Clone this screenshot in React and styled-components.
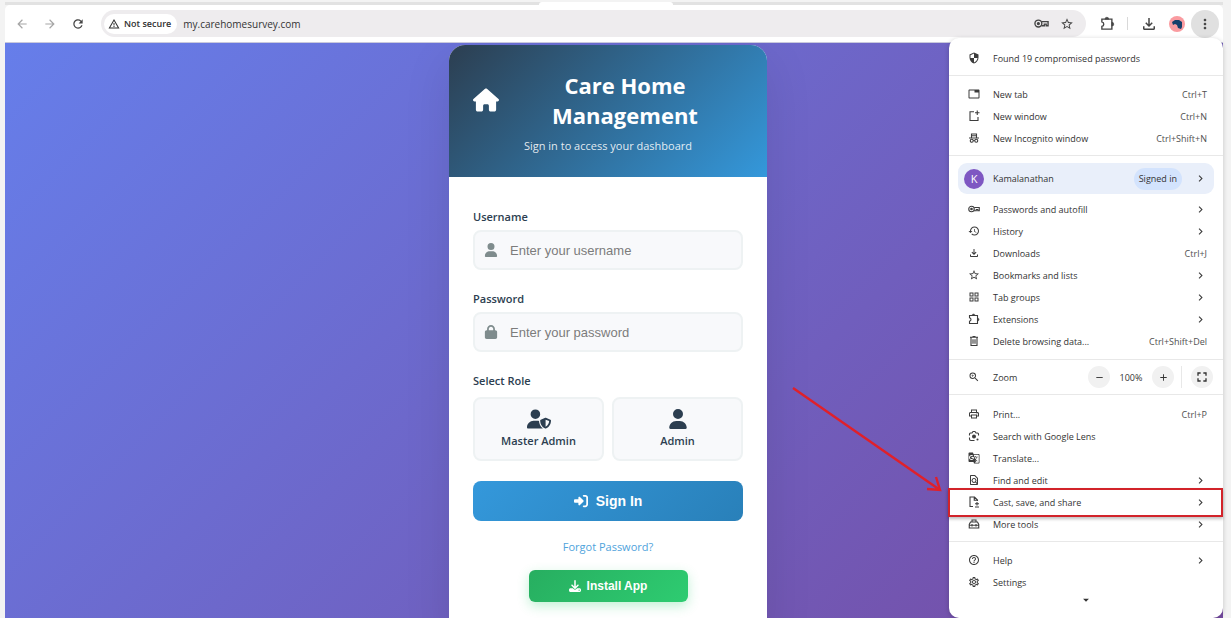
import React from "react";
import styled, { createGlobalStyle, css } from "styled-components";
import {
  FaDownload,
  FaHouse,
  FaLock,
  FaRightToBracket,
  FaUser,
  FaUserShield,
} from "react-icons/fa6";
import {
  MdAdd,
  MdArrowBack,
  MdArrowDropDown,
  MdArrowForward,
  MdChevronRight,
  MdFullscreen,
  MdGTranslate,
  MdHelpOutline,
  MdHistory,
  MdMoreVert,
  MdOutlineFileDownload,
  MdOutlineFindInPage,
  MdOutlineGridView,
  MdOutlinePrint,
  MdOutlineSettings,
  MdRefresh,
  MdRemove,
  MdSecurity,
  MdStarOutline,
  MdTab,
  MdWarningAmber,
  MdZoomIn,
} from "react-icons/md";

const GlobalStyle = createGlobalStyle`
  * {
    box-sizing: border-box;
  }
  body {
    margin: 0;
    background: #f3f3f3;
    font-family: "Open Sans", "Noto Sans", sans-serif;
    color: #333;
  }
  button, input {
    font-family: inherit;
    color: inherit;
  }
`;

const Window = styled.div`
  position: relative;
  height: 100vh;
  padding: 2px 8px 0 5px;
  display: flex;
  flex-direction: column;
  overflow: hidden;
`;

const TabStrip = styled.div`
  height: 3px;
  flex: none;
  display: flex;
  justify-content: center;
  background: #e2e2e2;
`;

const ActiveTab = styled.div`
  width: 134px;
  margin-right: 16px;
  background: white;
  border-radius: 4px 4px 0 0;
`;

const Toolbar = styled.header`
  height: 38px;
  flex: none;
  display: flex;
  align-items: center;
  padding: 0 4px 0 3px;
  background: white;
  border-bottom: 1px solid #c9c9dc;
  border-radius: 5px 5px 0 0;
`;

const ToolButton = styled.button`
  width: 28px;
  height: 28px;
  padding: 0;
  border: 0;
  border-radius: 50%;
  display: flex;
  align-items: center;
  justify-content: center;
  background: ${(props) => (props.$active ? "#e0e0e0" : "transparent")};
  color: ${(props) => (props.$muted ? "#a6a6a6" : "#454545")};
  font-size: ${(props) => props.$size || 14}px;
`;

const Omnibox = styled.div`
  flex: 1;
  height: 27px;
  margin: 0 7px 0 9px;
  padding: 0 6px 0 3px;
  display: flex;
  align-items: center;
  background: #eeecee;
  border-radius: 14px;

  ${ToolButton} {
    width: 26px;
  }
`;

const SecurityChip = styled.button`
  height: 20px;
  padding: 0 6px 0 4px;
  border: 0;
  border-radius: 10px;
  display: flex;
  align-items: center;
  gap: 4px;
  background: white;
  color: #303030;
  font-size: 9px;
  font-weight: 600;
`;

const Address = styled.input`
  flex: 1;
  min-width: 0;
  border: 0;
  padding: 0 6px;
  background: transparent;
  font-size: 10px;
  outline: none;
`;

const Separator = styled.span`
  width: 1px;
  height: 13px;
  margin: 0 7px 0 6px;
  background: #d9d9d9;
`;

const Avatar = styled.span`
  width: 16px;
  height: 16px;
  border-radius: 50%;
  background: #fa9ba0;
  display: flex;
`;

const Page = styled.main`
  flex: 1;
  min-height: 0;
  overflow: hidden;
  display: flex;
  justify-content: center;
  align-items: flex-start;
  padding: 2px 12px 0 0;
  background: linear-gradient(135deg, #667eea 0%, #764ba2 100%);
`;

const Card = styled.section`
  width: 100%;
  max-width: 318px;
  overflow: hidden;
  background: white;
  border-radius: 16px;
  box-shadow: 0 16px 48px rgba(0, 0, 0, 0.1);
`;

const CardHeader = styled.div`
  padding: 25px 24px 23px;
  background: linear-gradient(135deg, #2c3e50 0%, #3498db 100%);
  color: white;
  text-align: center;
`;

const Brand = styled.div`
  display: flex;
  align-items: center;
  gap: 8px;
  font-size: 26px;

  svg {
    flex: none;
  }
`;

const Title = styled.h1`
  flex: 1;
  margin: 0;
  font-size: 22px;
  line-height: 30px;
  font-weight: 700;
`;

const Subtitle = styled.p`
  margin: 8px 0 0;
  font-size: 11px;
  line-height: 16px;
  color: rgba(255, 255, 255, 0.88);
`;

const Form = styled.form`
  padding: 32px 24px;
  display: flex;
  flex-direction: column;
`;

const labelStyle = css`
  display: block;
  padding: 0;
  font-size: 11px;
  line-height: 16px;
  font-weight: 600;
  color: #2c3e50;
`;

const Field = styled.div`
  margin-bottom: 21px;
`;

const Label = styled.label`
  ${labelStyle}
  margin-bottom: 5px;
`;

const InputBox = styled.div`
  height: 40px;
  display: flex;
  align-items: center;
  gap: 12px;
  padding: 0 9px;
  border: 2px solid #eef2f3;
  border-radius: 8px;
  background: #f8f9fb;
  color: #7f8c8d;
  font-size: 14px;
`;

const TextInput = styled.input`
  flex: 1;
  min-width: 0;
  padding: 0;
  border: 0;
  outline: none;
  background: transparent;
  font-family: "Liberation Sans", Arial, sans-serif;
  font-size: 13px;

  &::placeholder {
    color: #7c7c7c;
  }
`;

const RoleGroup = styled.fieldset`
  margin: 0 0 20px;
  padding: 0;
  border: 0;
  min-width: 0;
`;

const Legend = styled.legend`
  ${labelStyle}
  margin-bottom: 8px;
`;

const Roles = styled.div`
  display: flex;
  gap: 8px;
`;

const RoleButton = styled.button`
  flex: 1;
  height: 64px;
  padding: 0;
  display: flex;
  flex-direction: column;
  align-items: center;
  justify-content: center;
  gap: 4px;
  border: 2px solid #eef2f3;
  border-radius: 8px;
  background: #f8f9fb;
  color: #2c3e50;
  font-size: 11px;
  line-height: 16px;
  font-weight: 600;
`;

const RoleIcon = styled.span`
  height: 20px;
  display: flex;
  align-items: center;
  font-size: ${(props) => props.$size}px;
`;

const SignInButton = styled.button`
  height: 40px;
  border: 0;
  border-radius: 8px;
  display: flex;
  align-items: center;
  justify-content: center;
  gap: 8px;
  background: linear-gradient(135deg, #3498db, #2980b9);
  color: white;
  font-family: "Liberation Sans", Arial, sans-serif;
  font-size: 14px;
  font-weight: 700;
`;

const ForgotLink = styled.a`
  align-self: center;
  margin: 18px 0 15px;
  font-size: 11px;
  line-height: 16px;
  color: #4fa3dc;
  text-decoration: none;
`;

const InstallButton = styled.button`
  align-self: center;
  width: 159px;
  height: 32px;
  border: 0;
  border-radius: 6px;
  display: flex;
  align-items: center;
  justify-content: center;
  gap: 6px;
  background: linear-gradient(135deg, #27ae60, #2ecc71);
  box-shadow: 0 4px 12px rgba(46, 204, 113, 0.3);
  color: white;
  font-family: "Liberation Sans", Arial, sans-serif;
  font-size: 12px;
  font-weight: 700;
`;

const Menu = styled.nav`
  position: absolute;
  top: 38px;
  right: 8px;
  width: 274px;
  padding-bottom: 12px;
  background: white;
  border-radius: 10px;
  box-shadow: 0 1px 5px rgba(0, 0, 0, 0.2);
`;

const MenuSection = styled.div`
  padding: ${(props) => props.$pad || "7px 0 6px"};

  & + & {
    border-top: 1px solid #e8e8e8;
  }
`;

const MenuRow = styled.button`
  position: relative;
  width: 100%;
  height: 22px;
  padding: 0 16px 0 19px;
  border: 0;
  display: flex;
  align-items: center;
  background: transparent;
  font-size: 9px;
  text-align: left;
`;

const MenuIcon = styled.span`
  width: 12px;
  margin-right: 13px;
  display: flex;
  justify-content: center;
  font-size: 12px;
  color: #3c3c3c;
`;

const MenuText = styled.span`
  flex: 1;
  white-space: nowrap;
`;

const Shortcut = styled.span`
  color: #505050;
`;

const Chevron = styled(MdChevronRight)`
  font-size: 13px;
  color: #3c3c3c;
`;

const Highlight = styled.span`
  position: absolute;
  inset: -3px 0 -4px -1px;
  border: 2px solid #d2232a;
  box-shadow: 0 2px 3px rgba(0, 0, 0, 0.25);
`;

const Pointer = styled.svg`
  position: absolute;
  right: 100%;
  bottom: 19px;
  margin-right: 6px;
`;

const Profile = styled.button`
  width: calc(100% - 18px);
  height: 31px;
  margin: 0 9px 4px;
  padding: 0 7px 0 6px;
  border: 0;
  border-radius: 9px;
  display: flex;
  align-items: center;
  background: #e9effa;
  font-size: 9px;
  text-align: left;
`;

const Initial = styled.span`
  width: 20px;
  height: 20px;
  margin-right: 9px;
  border-radius: 50%;
  display: flex;
  align-items: center;
  justify-content: center;
  background: #7e57c2;
  color: white;
  font-size: 11px;
`;

const SignedIn = styled.span`
  padding: 0 5px;
  margin-right: 12px;
  line-height: 22px;
  border-radius: 11px;
  background: #d3e3fd;
`;

const ZoomRow = styled.div`
  height: 34px;
  padding: 0 10px 0 19px;
  display: flex;
  align-items: center;
  font-size: 9px;

  ${Separator} {
    height: 22px;
    margin: 0 9px 0 7px;
    background: #e8e8e8;
  }
`;

const ZoomButton = styled.button`
  width: 22px;
  height: 22px;
  padding: 0;
  border: 0;
  border-radius: 50%;
  display: flex;
  align-items: center;
  justify-content: center;
  background: #f1f1f1;
  font-size: ${(props) => props.$size || 11}px;
`;

const ZoomValue = styled.span`
  width: 42px;
  text-align: center;
`;

const ScrollHint = styled.div`
  height: 13px;
  display: flex;
  align-items: center;
  justify-content: center;
  font-size: 14px;
`;

const Stroke = ({ children }) => (
  <svg
    width="1em"
    height="1em"
    viewBox="0 0 24 24"
    fill="none"
    stroke="currentColor"
    strokeWidth="2.2"
    aria-hidden="true"
  >
    {children}
  </svg>
);

const KeyIcon = () => (
  <Stroke>
    <circle cx="7" cy="12" r="5.5" />
    <circle cx="7" cy="12" r="1.5" fill="currentColor" />
    <path d="M12.500 9H22.500v6.500h-3V13h-3v2.500h-4.500" />
  </Stroke>
);

const NewWindowIcon = () => (
  <Stroke>
    <path d="M12 3.500H4V21h16v-7M18.500 1v9M14 5.500h9" />
  </Stroke>
);

const IncognitoIcon = () => (
  <Stroke>
    <path d="M2 12h20M7 11V4h10v7M7 7.500h10" />
    <circle cx="7.500" cy="17.500" r="3" />
    <circle cx="16.500" cy="17.500" r="3" />
    <path d="M10.500 17h3" />
  </Stroke>
);

const PuzzleIcon = () => (
  <Stroke>
    <path d="M3 5h16v16H3v-4.500q3-.5 3-3.500t-3-3.500z" />
    <path
      d="M8 5a3 3 0 0 1 6 0zM19 10a3 3 0 0 1 0 6z"
      fill="currentColor"
      strokeWidth="1"
    />
  </Stroke>
);

const TrashIcon = () => (
  <Stroke>
    <path d="M4 4.500h16M9 3h6M6 5v16h12V5M10 8.500v9M14 8.500v9" />
  </Stroke>
);

const LensIcon = () => (
  <Stroke>
    <path d="M3 11V8q0-2 2-2h3l2-3h4l2 3h3q2 0 2 2v3M3 15v3q0 3 3 3h7" />
    <circle cx="12" cy="13" r="2.800" fill="currentColor" />
    <circle cx="19" cy="19" r="1" />
  </Stroke>
);

const CastIcon = () => (
  <Stroke>
    <path d="M10 21H4V2h9l6 6v2M12.500 2v6.500H19M18 12v7M14 15.500h8M14 22h8" />
  </Stroke>
);

const ToolboxIcon = () => (
  <Stroke>
    <path d="M8 8V4h8v4M2.500 20v-7L5 8h14l2.500 5v7zM2.500 14.500h19M8 12v5M16 12v5" />
  </Stroke>
);

const Item = ({ icon, text, shortcut, arrow, children }) => (
  <MenuRow type="button">
    <MenuIcon>{icon}</MenuIcon>
    <MenuText>{text}</MenuText>
    {shortcut && <Shortcut>{shortcut}</Shortcut>}
    {arrow && <Chevron />}
    {children}
  </MenuRow>
);

const BrowserMenu = () => (
  <Menu aria-label="Browser menu">
    <MenuSection $pad="9px 0 6px">
      <Item icon={<MdSecurity />} text="Found 19 compromised passwords" />
    </MenuSection>
    <MenuSection>
      <Item icon={<MdTab />} text="New tab" shortcut="Ctrl+T" />
      <Item icon={<NewWindowIcon />} text="New window" shortcut="Ctrl+N" />
      <Item
        icon={<IncognitoIcon />}
        text="New Incognito window"
        shortcut="Ctrl+Shift+N"
      />
    </MenuSection>
    <MenuSection $pad="7px 0">
      <Profile type="button">
        <Initial>K</Initial>
        <MenuText>Kamalanathan</MenuText>
        <SignedIn>Signed in</SignedIn>
        <Chevron />
      </Profile>
      <Item icon={<KeyIcon />} text="Passwords and autofill" arrow />
      <Item icon={<MdHistory />} text="History" arrow />
      <Item icon={<MdOutlineFileDownload />} text="Downloads" shortcut="Ctrl+J" />
      <Item icon={<MdStarOutline />} text="Bookmarks and lists" arrow />
      <Item icon={<MdOutlineGridView />} text="Tab groups" arrow />
      <Item icon={<PuzzleIcon />} text="Extensions" arrow />
      <Item
        icon={<TrashIcon />}
        text="Delete browsing data..."
        shortcut="Ctrl+Shift+Del"
      />
    </MenuSection>
    <MenuSection $pad="0">
      <ZoomRow>
        <MenuIcon>
          <MdZoomIn />
        </MenuIcon>
        <MenuText>Zoom</MenuText>
        <ZoomButton type="button" aria-label="Zoom out">
          <MdRemove />
        </ZoomButton>
        <ZoomValue>100%</ZoomValue>
        <ZoomButton type="button" aria-label="Zoom in">
          <MdAdd />
        </ZoomButton>
        <Separator />
        <ZoomButton type="button" aria-label="Full screen" $size={16}>
          <MdFullscreen />
        </ZoomButton>
      </ZoomRow>
    </MenuSection>
    <MenuSection $pad="8px 0 6px">
      <Item icon={<MdOutlinePrint />} text="Print..." shortcut="Ctrl+P" />
      <Item icon={<LensIcon />} text="Search with Google Lens" />
      <Item icon={<MdGTranslate />} text="Translate..." />
      <Item icon={<MdOutlineFindInPage />} text="Find and edit" arrow />
      <Item icon={<CastIcon />} text="Cast, save, and share" arrow>
        <Highlight />
        <Pointer
          width="152"
          height="108"
          viewBox="0 0 152 108"
          fill="none"
          stroke="#e0202a"
          strokeWidth="2.4"
        >
          <path d="M2 2L149 104M136 103L149 104L145 91" />
        </Pointer>
      </Item>
      <Item icon={<ToolboxIcon />} text="More tools" arrow />
    </MenuSection>
    <MenuSection $pad="7px 0 0">
      <Item icon={<MdHelpOutline />} text="Help" arrow />
      <Item icon={<MdOutlineSettings />} text="Settings" />
      <ScrollHint>
        <MdArrowDropDown />
      </ScrollHint>
    </MenuSection>
  </Menu>
);

const LoginCard = () => (
  <Card>
    <CardHeader>
      <Brand>
        <FaHouse />
        <Title>Care Home Management</Title>
      </Brand>
      <Subtitle>Sign in to access your dashboard</Subtitle>
    </CardHeader>
    <Form>
      <Field>
        <Label htmlFor="username">Username</Label>
        <InputBox>
          <FaUser />
          <TextInput id="username" placeholder="Enter your username" />
        </InputBox>
      </Field>
      <Field>
        <Label htmlFor="password">Password</Label>
        <InputBox>
          <FaLock />
          <TextInput
            id="password"
            type="password"
            placeholder="Enter your password"
          />
        </InputBox>
      </Field>
      <RoleGroup>
        <Legend>Select Role</Legend>
        <Roles>
          <RoleButton type="button">
            <RoleIcon $size={24}>
              <FaUserShield />
            </RoleIcon>
            Master Admin
          </RoleButton>
          <RoleButton type="button">
            <RoleIcon $size={20}>
              <FaUser />
            </RoleIcon>
            Admin
          </RoleButton>
        </Roles>
      </RoleGroup>
      <SignInButton type="submit">
        <FaRightToBracket />
        Sign In
      </SignInButton>
      <ForgotLink href="#forgot">Forgot Password?</ForgotLink>
      <InstallButton type="button">
        <FaDownload />
        Install App
      </InstallButton>
    </Form>
  </Card>
);

const App = () => {
  return (
    <>
      <GlobalStyle />
      <Window>
        <TabStrip>
          <ActiveTab />
        </TabStrip>
        <Toolbar>
          <ToolButton type="button" aria-label="Back" $muted>
            <MdArrowBack />
          </ToolButton>
          <ToolButton type="button" aria-label="Forward" $muted>
            <MdArrowForward />
          </ToolButton>
          <ToolButton type="button" aria-label="Reload">
            <MdRefresh />
          </ToolButton>
          <Omnibox>
            <SecurityChip type="button">
              <MdWarningAmber size={12} />
              Not secure
            </SecurityChip>
            <Address aria-label="Address" defaultValue="my.carehomesurvey.com" />
            <ToolButton type="button" aria-label="Passwords" $size={15}>
              <KeyIcon />
            </ToolButton>
            <ToolButton type="button" aria-label="Bookmark">
              <MdStarOutline />
            </ToolButton>
          </Omnibox>
          <ToolButton type="button" aria-label="Extensions" $size={15}>
            <PuzzleIcon />
          </ToolButton>
          <Separator />
          <ToolButton type="button" aria-label="Downloads" $size={18}>
            <MdOutlineFileDownload />
          </ToolButton>
          <ToolButton type="button" aria-label="Profile">
            <Avatar>
              <svg width="16" height="16" viewBox="0 0 16 16" aria-hidden="true">
                <path
                  fill="#173f6b"
                  d="M3 6L6 4L10 4L13 6V11L12 13L9 12L8 9L6 8L4 9Z"
                />
              </svg>
            </Avatar>
          </ToolButton>
          <ToolButton type="button" aria-label="Menu" $active $size={16}>
            <MdMoreVert />
          </ToolButton>
        </Toolbar>
        <Page>
          <LoginCard />
        </Page>
        <BrowserMenu />
      </Window>
    </>
  );
};

export default App;
